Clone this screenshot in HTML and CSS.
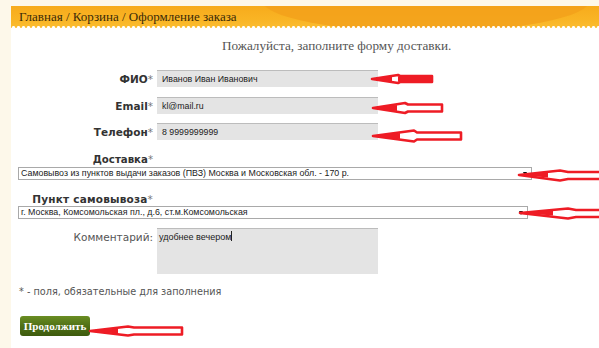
FILE: index.html
```html
<!DOCTYPE html>
<html lang="ru">
<head>
<meta charset="utf-8">
<title>Оформление заказа</title>
<link rel="stylesheet" href="styles.css">
</head>
<body>
<div class="page">
  <div class="crumbs"><span class="crumbs-text">Главная / Корзина / Оформление заказа</span></div>
  <div class="title">Пожалуйста, заполните форму доставки.</div>

  <div class="row row-first">
    <div class="label"><b>ФИО</b><span class="req">*</span></div>
    <div class="input">Иванов Иван Иванович</div>
  </div>
  <div class="row row-2">
    <div class="label"><b>Email</b><span class="req">*</span></div>
    <div class="input">kl@mail.ru</div>
  </div>
  <div class="row row-3">
    <div class="label"><b>Телефон</b><span class="req">*</span></div>
    <div class="input">8 9999999999</div>
  </div>

  <div class="block-label block-delivery"><b>Доставка</b><span class="req">*</span></div>
  <div class="select select-wide">Самовывоз из пунктов выдачи заказов (ПВЗ) Москва и Московская обл. - 170 р.<span class="caret"></span></div>

  <div class="block-label block-point"><b>Пункт самовывоза</b><span class="req">*</span></div>
  <div class="select select-narrow">г. Москва, Комсомольская пл., д.6, ст.м.Комсомольская<span class="caret"></span></div>

  <div class="row row-comment">
    <div class="label label-plain">Комментарий:</div>
    <div class="textarea">удобнее вечером<span class="cursor"></span></div>
  </div>

  <div class="note">* - поля, обязательные для заполнения</div>

  <div class="btn-row"><span class="btn">Продолжить</span></div>
</div>

<svg class="marks" width="599" height="348" viewBox="0 0 599 348" xmlns="http://www.w3.org/2000/svg">
  <g fill="#ffffff" stroke="#ee1c25" stroke-width="2.6" stroke-linejoin="round">
    <path d="M372 79 L398 75 L400 76 L432 76 L432 82 L400 82 L398 83 Z"/>
    <path d="M398 76.5 L432 76.5 L432 81.5 L398 81.5 Z" fill="#ee1c25" stroke="none"/>
    <path d="M373 108 L405 103 L408 104.5 L442 104.5 L442 111.5 L408 111.5 L405 113 Z"/>
    <path d="M373 136 L414 130.5 L417 132.5 L461 132.5 L461 139.5 L417 139.5 L414 141.5 Z"/>
    <path d="M519 175 L560 170.5 L568 172 L604 172 L604 179 L568 179 L560 180.5 Z"/>
    <path d="M520 213 L568 208.5 L576 210 L604 210 L604 217 L576 217 L568 218.5 Z"/>
    <path d="M90 331 L128 326.5 L134 327.5 L182 327.5 L182 334.5 L134 334.5 L128 335.5 Z"/>
  </g>
  <g fill="#ee1c25">
    <path d="M372 79 L392 76.5 L392 81.5 Z"/>
    <path d="M373 108 L397 105 L397 111 Z"/>
    <path d="M373 136 L400 133 L400 139 Z"/>
    <path d="M519 175 L548 172.5 L548 177.5 Z"/>
    <path d="M520 213 L553 210.5 L553 215.5 Z"/>
    <path d="M90 331 L118 328.5 L118 333.5 Z"/>
  </g>
</svg>
</body>
</html>
```
FILE: styles.css
```css
html, body {
  margin: 0;
  padding: 0;
}
body {
  background: #fdf8ea;
  width: 599px;
  height: 348px;
  overflow: hidden;
  position: relative;
  font-family: "DejaVu Sans", Verdana, sans-serif;
  color: #333;
}
.page {
  margin: 6px 0 0 11px;
  background: #ffffff;
  height: 342px;
}
.crumbs {
  position: relative;
  height: 22px;
  overflow: hidden;
  background: linear-gradient(to bottom, #f7ab1c 0%, #f9b424 60%, #fbbd30 100%);
  font-family: "Liberation Serif", "Times New Roman", serif;
  font-size: 13px;
  line-height: 22px;
  color: #3b2a08;
}
.crumbs::before {
  content: "";
  position: absolute;
  left: 250px;
  top: -40px;
  width: 330px;
  height: 66px;
  border-radius: 50%;
  background: #f2a01a;
  opacity: 0.8;
}
.crumbs::after {
  content: "";
  position: absolute;
  left: 0;
  right: 0;
  bottom: 0;
  height: 3px;
  background: radial-gradient(circle at 50% 100%, #ffffff 1.6px, rgba(255,255,255,0) 2.2px);
  background-size: 5px 3px;
}
.crumbs-text {
  position: relative;
  padding-left: 8px;
}
.title {
  margin-top: 10px;
  padding-left: 211px;
  font-family: "Liberation Serif", "Times New Roman", serif;
  font-size: 13.2px;
  line-height: 16px;
  color: #555;
}
.row {
  display: grid;
  grid-template-columns: 142px 221px;
  column-gap: 4px;
  align-items: center;
}
.row-first { margin-top: 16px; }
.row-2 { margin-top: 10px; }
.row-3 { margin-top: 9px; }
.label {
  text-align: right;
  font-size: 10.5px;
  color: #333;
}
.label b { font-weight: bold; }
.req {
  color: #777;
  font-weight: normal;
}
.input {
  box-sizing: border-box;
  height: 17px;
  background: #e4e4e4;
  border-top: 1px solid #bcbcbc;
  padding-left: 5px;
  font-family: "Liberation Sans", Arial, sans-serif;
  font-size: 8.8px;
  line-height: 16px;
  color: #222;
}
.block-label {
  width: 142px;
  text-align: right;
  font-size: 10.5px;
  line-height: 14px;
}
.block-delivery {
  margin-top: 13px;
  font-size: 10.2px;
}
.block-point {
  margin-top: 12px;
  letter-spacing: 0.2px;
}
.select {
  position: relative;
  box-sizing: border-box;
  margin: 0 0 0 7px;
  height: 13px;
  border: 1px solid #a9a9a9;
  background: #fff;
  padding-left: 2px;
  font-family: "Liberation Sans", Arial, sans-serif;
  font-size: 8.85px;
  line-height: 11px;
  color: #222;
  white-space: nowrap;
}
.select-wide { width: 514px; }
.select-narrow { width: 510px; }
.caret {
  position: absolute;
  right: 4px;
  top: 4px;
  width: 0;
  height: 0;
  border-left: 2.5px solid transparent;
  border-right: 2.5px solid transparent;
  border-top: 4px solid #111;
}
.row-comment {
  margin-top: 9px;
  align-items: start;
}
.label-plain {
  padding-top: 3px;
  color: #555;
  font-weight: normal;
}
.textarea {
  box-sizing: border-box;
  height: 46px;
  background: #e4e4e4;
  border-top: 1px solid #bcbcbc;
  padding: 2px 0 0 2px;
  font-family: "Liberation Sans", Arial, sans-serif;
  font-size: 9px;
  line-height: 12px;
  color: #222;
}
.cursor {
  display: inline-block;
  width: 1px;
  height: 10px;
  background: #222;
  vertical-align: -1px;
}
.note {
  margin: 12px 0 0 8px;
  font-size: 9.7px;
  color: #555;
}
.btn-row {
  margin: 19px 0 0 9px;
}
.btn {
  display: inline-block;
  box-sizing: border-box;
  width: 70px;
  height: 20px;
  border-radius: 3px;
  background: linear-gradient(to bottom, #6a8d22 0%, #4f7016 50%, #3d5a0e 100%);
  font-family: "Liberation Serif", "Times New Roman", serif;
  font-weight: bold;
  font-size: 11px;
  line-height: 20px;
  text-align: center;
  color: #fff;
  vertical-align: top;
}
.marks {
  position: absolute;
  left: 0;
  top: 0;
  pointer-events: none;
}
```
